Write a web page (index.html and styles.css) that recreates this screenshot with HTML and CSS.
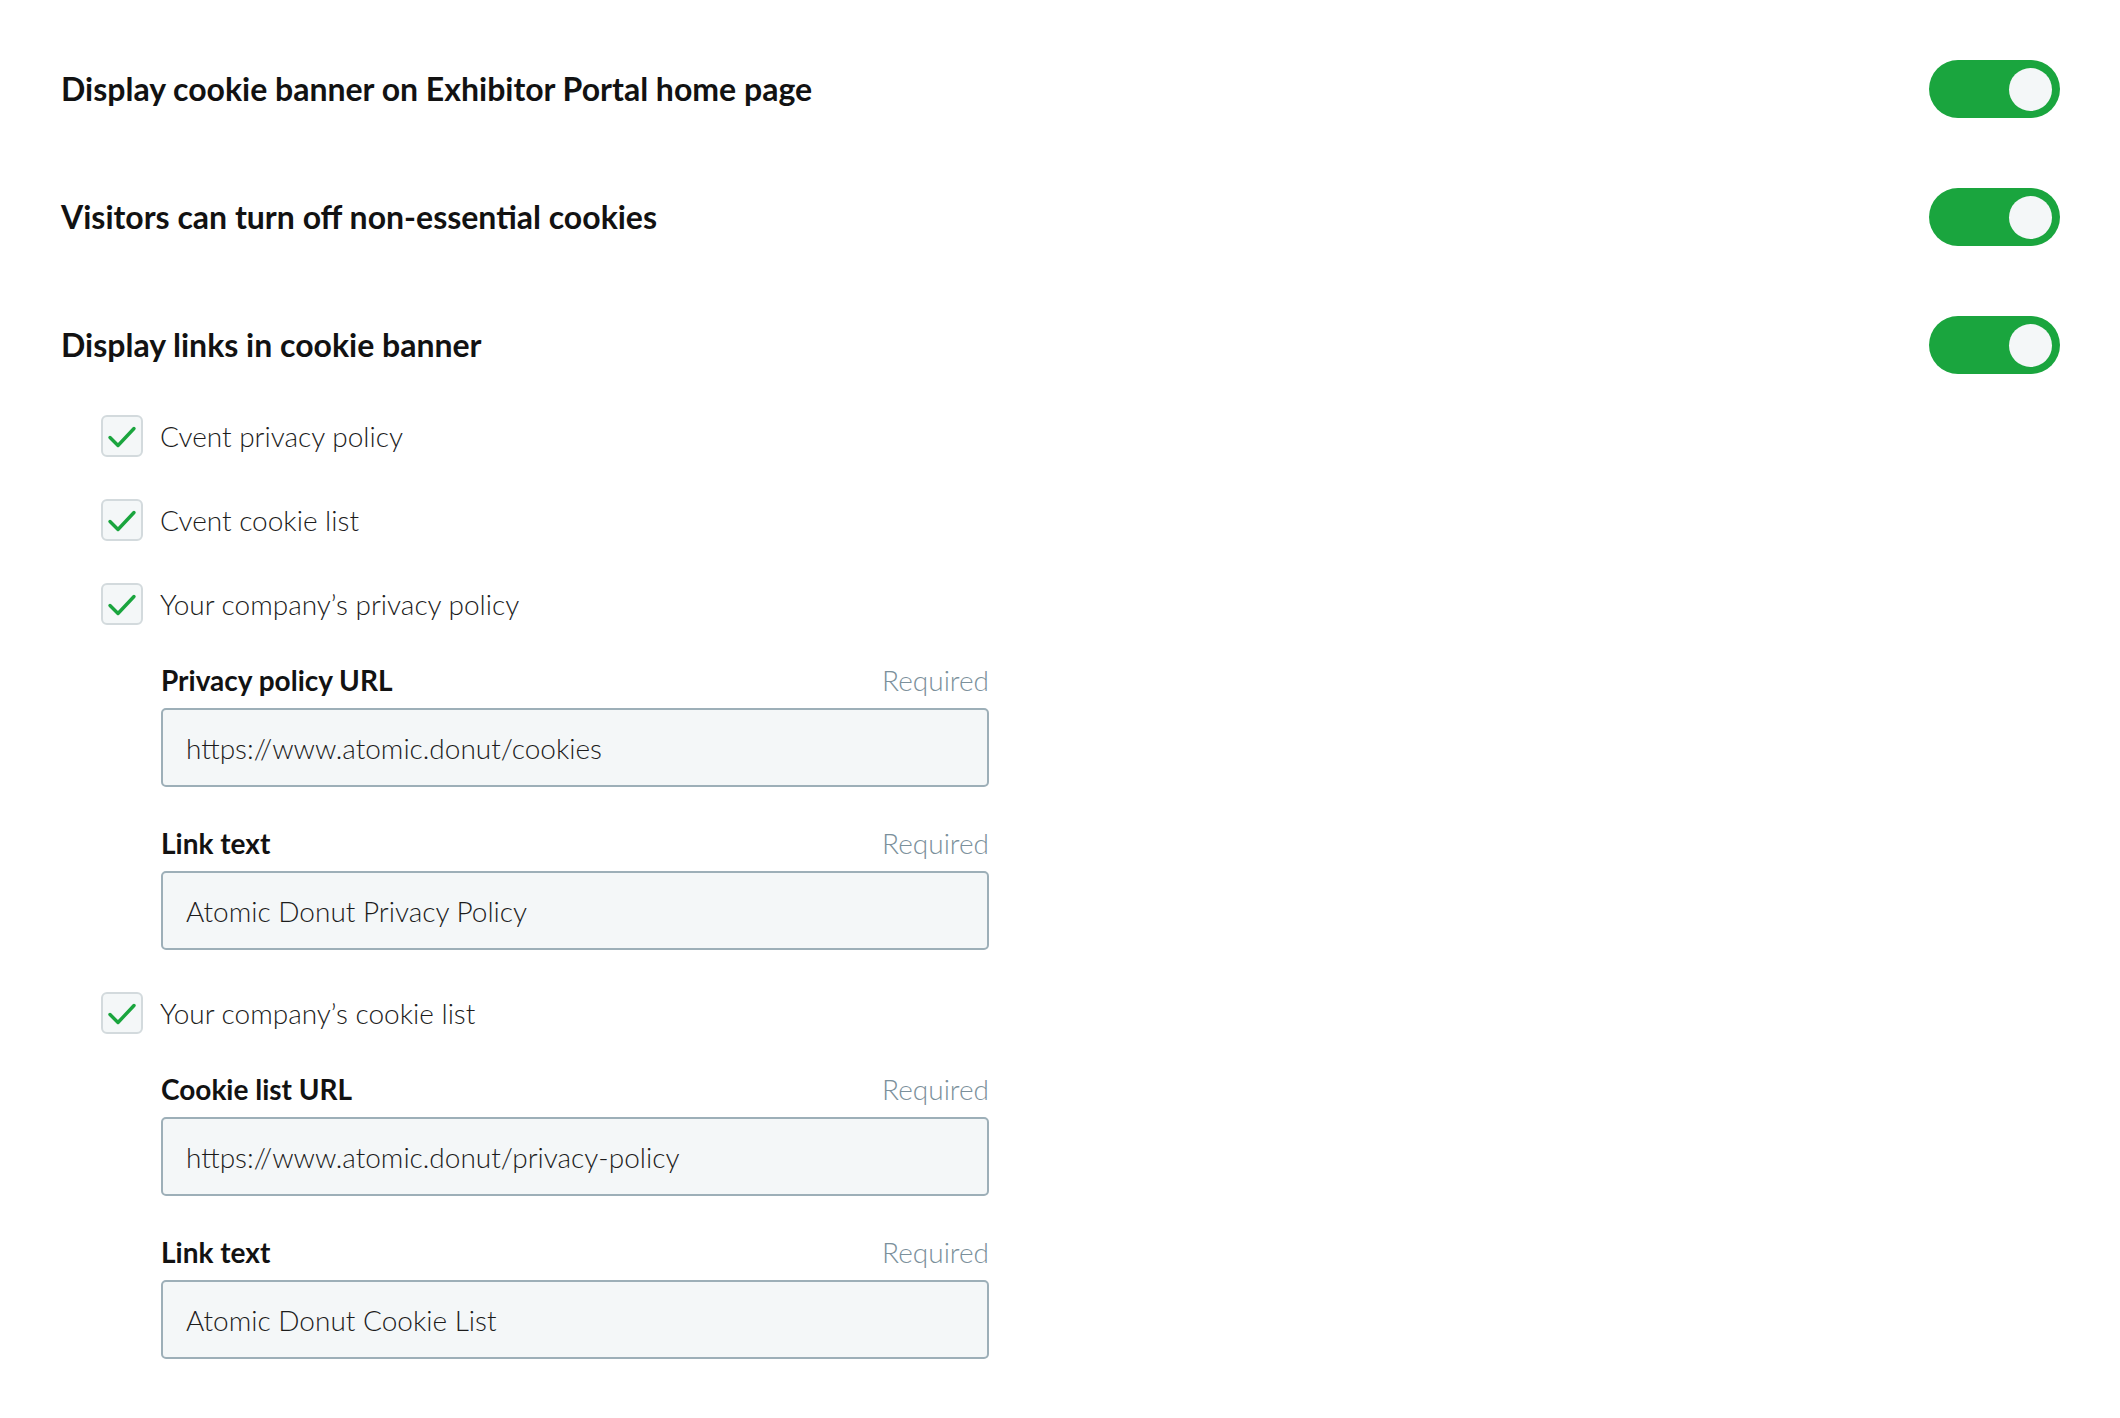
FILE: index.html
```html
<!DOCTYPE html>
<html lang="en">
<head>
<meta charset="utf-8">
<title>Cookie banner settings</title>
<link rel="stylesheet" href="styles.css">
</head>
<body>
<main class="page">
  <section class="settings">
    <div class="setting-row">
      <h2 class="setting-title">Display cookie banner on Exhibitor Portal home page</h2>
      <span class="toggle"><span class="knob"></span></span>
    </div>
    <div class="setting-row">
      <h2 class="setting-title">Visitors can turn off non-essential cookies</h2>
      <span class="toggle"><span class="knob"></span></span>
    </div>
    <div class="setting-row">
      <h2 class="setting-title">Display links in cookie banner</h2>
      <span class="toggle"><span class="knob"></span></span>
    </div>
  </section>

  <section class="options">
    <div class="option">
      <label class="check-row">
        <span class="checkbox"><svg viewBox="0 0 42 42" width="42" height="42"><path d="M9 22.5 L17 30.5 L33 13.5" /></svg></span>
        <span class="check-label">Cvent privacy policy</span>
      </label>
    </div>
    <div class="option">
      <label class="check-row">
        <span class="checkbox"><svg viewBox="0 0 42 42" width="42" height="42"><path d="M9 22.5 L17 30.5 L33 13.5" /></svg></span>
        <span class="check-label">Cvent cookie list</span>
      </label>
    </div>
    <div class="option">
      <label class="check-row">
        <span class="checkbox"><svg viewBox="0 0 42 42" width="42" height="42"><path d="M9 22.5 L17 30.5 L33 13.5" /></svg></span>
        <span class="check-label">Your company’s privacy policy</span>
      </label>
      <div class="fields">
        <div class="field">
          <div class="field-head"><span class="field-label">Privacy policy URL</span><span class="required">Required</span></div>
          <div class="input">https://www.atomic.donut/cookies</div>
        </div>
        <div class="field">
          <div class="field-head"><span class="field-label">Link text</span><span class="required">Required</span></div>
          <div class="input">Atomic Donut Privacy Policy</div>
        </div>
      </div>
    </div>
    <div class="option">
      <label class="check-row">
        <span class="checkbox"><svg viewBox="0 0 42 42" width="42" height="42"><path d="M9 22.5 L17 30.5 L33 13.5" /></svg></span>
        <span class="check-label">Your company’s cookie list</span>
      </label>
      <div class="fields">
        <div class="field">
          <div class="field-head"><span class="field-label">Cookie list URL</span><span class="required">Required</span></div>
          <div class="input">https://www.atomic.donut/privacy-policy</div>
        </div>
        <div class="field">
          <div class="field-head"><span class="field-label">Link text</span><span class="required">Required</span></div>
          <div class="input">Atomic Donut Cookie List</div>
        </div>
      </div>
    </div>
  </section>
</main>
</body>
</html>
```

FILE: styles.css
```css
* { box-sizing: border-box; }

html, body {
  margin: 0;
  padding: 0;
  background: #ffffff;
}

body {
  font-family: Lato, "Open Sans", "Liberation Sans", sans-serif;
  color: #141414;
  font-size: 28px;
}

.page {
  padding: 60px 60px 0 61px;
}

.settings {
  display: flex;
  flex-direction: column;
  gap: 70px;
}

.setting-row {
  display: flex;
  align-items: center;
  justify-content: space-between;
  height: 58px;
}

.setting-title {
  margin: 0;
  font-size: 32px;
  font-weight: 700;
  line-height: 56px;
  color: #121212;
}

.toggle {
  width: 131px;
  height: 58px;
  border-radius: 29px;
  background: #1aa53e;
  display: flex;
  align-items: center;
  justify-content: flex-end;
  padding-right: 8px;
}

.knob {
  width: 43px;
  height: 43px;
  border-radius: 50%;
  background: #f4f7f8;
}

.options {
  margin-top: 41px;
  padding-left: 40px;
  display: flex;
  flex-direction: column;
  gap: 42px;
}

.check-row {
  display: flex;
  align-items: center;
  gap: 17px;
  height: 42px;
}

.checkbox {
  width: 42px;
  height: 42px;
  border: 2px solid #d3dadd;
  border-radius: 6px;
  background: #f4f7f8;
  display: flex;
  align-items: center;
  justify-content: center;
  flex: none;
}

.checkbox svg {
  display: block;
  margin: -2px;
}

.checkbox path {
  fill: none;
  stroke: #1aa53e;
  stroke-width: 3.4;
  stroke-linecap: round;
  stroke-linejoin: round;
}

.check-label {
  font-weight: 300;
  line-height: 42px;
  color: #1c1c1c;
}

.fields {
  margin-top: 38px;
  padding-left: 60px;
  width: 888px;
  display: flex;
  flex-direction: column;
  gap: 39px;
}

.field {
  display: flex;
  flex-direction: column;
  gap: 11px;
}

.field-head {
  display: flex;
  justify-content: space-between;
  align-items: baseline;
  height: 34px;
  line-height: 34px;
}

.field-label {
  font-weight: 700;
  color: #121212;
}

.required {
  font-weight: 300;
  color: #7b909b;
}

.input {
  height: 79px;
  border: 2px solid #9dafb8;
  border-radius: 5px;
  background: #f4f7f8;
  padding: 0 23px;
  display: flex;
  align-items: center;
  font-weight: 300;
  color: #1c1c1c;
}
```
